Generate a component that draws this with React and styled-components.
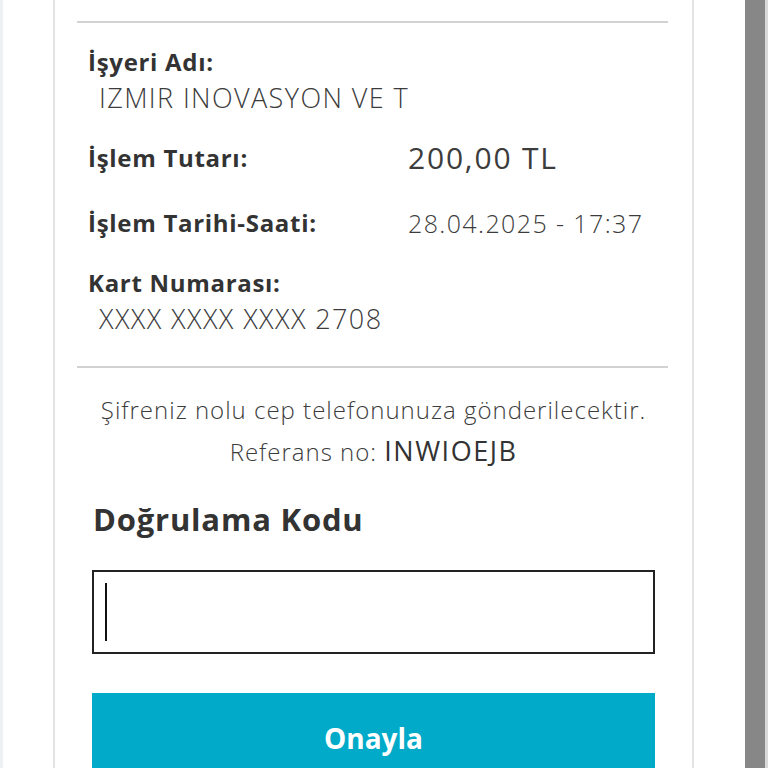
import React from "react";
import styled, { createGlobalStyle } from "styled-components";

const GlobalStyle = createGlobalStyle`
  html, body {
    margin: 0;
    padding: 0;
    background: #ffffff;
    overflow: hidden;
  }
  body {
    font-family: "Open Sans", "Noto Sans", sans-serif;
    color: #3a3a3a;
  }
  * { box-sizing: border-box; }
`;

const Screen = styled.div`
  display: flex;
  height: 768px;
  width: 768px;
  overflow: hidden;
`;

const EdgeStrip = styled.div`
  width: 3px;
  flex-shrink: 0;
  background: ${(p) => p.color};
`;

const Gutter = styled.div`
  width: ${(p) => p.w}px;
  flex-shrink: 0;
  background: #ffffff;
`;

const ScrollBar = styled.div`
  width: 20px;
  flex-shrink: 0;
  background: #878787;
`;

const Card = styled.div`
  width: 641px;
  flex-shrink: 0;
  border-left: 2px solid #e3e3e3;
  border-right: 2px solid #e3e3e3;
  padding-top: 21px;
`;

const Divider = styled.hr`
  border: none;
  height: 2px;
  background: #d2d2d2;
  margin: 0 24px 0 22px;
`;

const Details = styled.div`
  padding: 21px 0 29px 33px;
  display: flex;
  flex-direction: column;
  gap: 24px;
`;

const Field = styled.div`
  display: flex;
  flex-direction: column;
`;

const Row = styled.div`
  display: flex;
  align-items: flex-start;
  min-height: ${(p) => p.h || 36}px;
`;

const Label = styled.div`
  font-weight: 700;
  font-size: 24px;
  letter-spacing: 0.7px;
  line-height: 36px;
  color: #333333;
  width: ${(p) => (p.inline ? "320px" : "auto")};
`;

const Value = styled.div`
  font-size: ${(p) => (p.big ? 30 : p.indent ? 27 : 25)}px;
  font-weight: ${(p) => (p.big ? 400 : 300)};
  letter-spacing: ${(p) => (p.big ? 1.8 : 1.4)}px;
  line-height: 36px;
  color: #3c3c3c;
  padding-left: ${(p) => (p.indent ? "11px" : "0")};
`;

const Verify = styled.div`
  padding: 21px 37px 0 37px;
`;

const Notice = styled.p`
  margin: 0;
  text-align: center;
  font-size: 24px;
  font-weight: 300;
  letter-spacing: 1px;
  line-height: 42px;
  height: 42px;
  color: #3c3c3c;
`;

const RefCode = styled.span`
  font-size: 27px;
  font-weight: 400;
  letter-spacing: 1.5px;
  line-height: 1;
  color: #333333;
`;

const Heading = styled.h2`
  margin: 28px 0 0 1px;
  font-size: 31px;
  font-weight: 700;
  letter-spacing: 0.8px;
  line-height: 36px;
  color: #333333;
`;

const InputBox = styled.label`
  margin-top: 33px;
  height: 84px;
  border: 2px solid #222222;
  display: flex;
  align-items: center;
  padding-left: 11px;
  background: #ffffff;
`;

const Caret = styled.span`
  width: 2px;
  height: 58px;
  background: #111111;
  flex-shrink: 0;
`;

const CodeInput = styled.input`
  flex: 1;
  border: none;
  outline: none;
  background: transparent;
  font-size: 24px;
  height: 100%;
  caret-color: transparent;
`;

const ConfirmButton = styled.button`
  margin-top: 39px;
  width: 100%;
  height: 90px;
  border: none;
  background: #01aac9;
  color: #ffffff;
  font-family: "Open Sans", sans-serif;
  font-size: 28px;
  font-weight: 700;
  cursor: pointer;
`;

export default function App() {
  return (
    <>
      <GlobalStyle />
      <Screen>
        <EdgeStrip color="#eef0f3" />
        <Gutter w={50} />
        <Card>
          <Divider />
          <Details>
            <Field>
              <Label>İşyeri Adı:</Label>
              <Value indent>IZMIR INOVASYON VE T</Value>
            </Field>
            <Row h={41}>
              <Label inline>İşlem Tutarı:</Label>
              <Value big>200,00 TL</Value>
            </Row>
            <Row>
              <Label inline>İşlem Tarihi-Saati:</Label>
              <Value>28.04.2025 - 17:37</Value>
            </Row>
            <Field>
              <Label>Kart Numarası:</Label>
              <Value indent>XXXX XXXX XXXX 2708</Value>
            </Field>
          </Details>
          <Divider />
          <Verify>
            <Notice>Şifreniz nolu cep telefonunuza gönderilecektir.</Notice>
            <Notice>
              Referans no: <RefCode>INWIOEJB</RefCode>
            </Notice>
            <Heading>Doğrulama Kodu</Heading>
            <InputBox>
              <Caret />
              <CodeInput type="text" inputMode="numeric" />
            </InputBox>
            <ConfirmButton>Onayla</ConfirmButton>
          </Verify>
        </Card>
        <Gutter w={51} />
        <ScrollBar />
        <EdgeStrip color="#d9d9d9" />
      </Screen>
    </>
  );
}
